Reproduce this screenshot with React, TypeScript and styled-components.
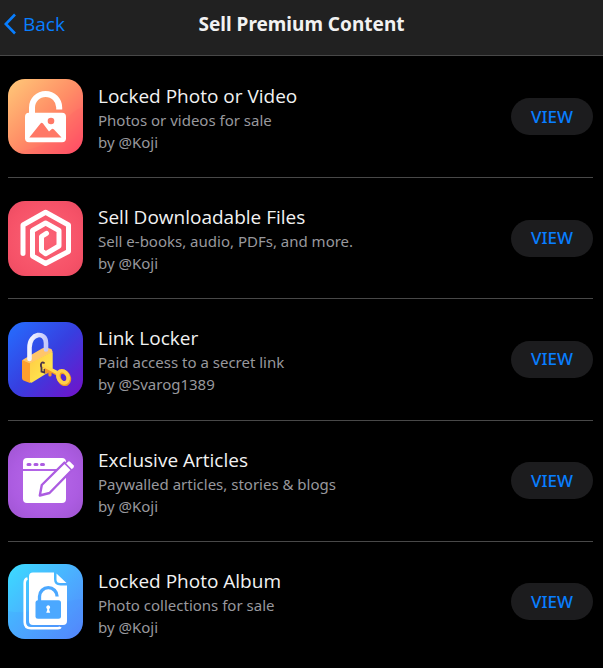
import React from 'react';
import styled, { createGlobalStyle } from 'styled-components';

const GlobalStyle = createGlobalStyle`
  * { box-sizing: border-box; }
  body {
    margin: 0;
    background: #000;
    color: #f2f2f2;
    font-family: 'Noto Sans', 'Open Sans', sans-serif;
  }
`;

const Page = styled.main`
  display: flex;
  flex-direction: column;
  min-height: 100vh;
  padding-bottom: 6px;
`;

const Header = styled.header`
  display: grid;
  grid-template-columns: 1fr auto 1fr;
  align-items: center;
  height: 56px;
  padding: 0 4px 8px;
  background: #212121;
  border-bottom: 1px solid #484848;
`;

const BackLink = styled.a`
  display: flex;
  align-items: center;
  gap: 7px;
  color: #087eff;
  font-family: 'Open Sans', sans-serif;
  font-size: 19px;
  line-height: 24px;
  text-decoration: none;
`;

const Title = styled.h1`
  margin: 0;
  font-size: 19px;
  line-height: 24px;
  font-weight: 700;
`;

const List = styled.ul`
  flex: 1;
  display: grid;
  grid-auto-rows: 1fr;
  margin: 0;
  padding: 0 10px 0 8px;
  list-style: none;
`;

const Row = styled.li`
  display: flex;
  align-items: center;
  gap: 15px;
  padding: 16px 0;
  & + & { border-top: 1px solid #484848; }
`;

const AppIcon = styled.svg`
  flex: none;
  width: 75px;
  height: 75px;
  border-radius: 17px;
`;

const Info = styled.div`
  flex: 1;
  min-width: 0;
  padding-top: 2px;
`;

const Name = styled.h2`
  margin: 0;
  font-family: 'Open Sans', sans-serif;
  font-size: 19px;
  line-height: 26px;
  font-weight: 500;
`;

const Detail = styled.p`
  margin: 0;
  color: #98989d;
  font-size: 15px;
  line-height: 22px;
`;

const ViewButton = styled.button`
  flex: none;
  height: 37px;
  padding: 0 20px;
  border: 0;
  border-radius: 19px;
  background: #1c1c1e;
  color: #087eff;
  font: 500 17px/24px 'Noto Sans', 'Open Sans', sans-serif;
  cursor: pointer;
`;

const PhotoIcon = () => (
  <AppIcon viewBox="0 0 75 75" aria-hidden="true">
    <defs>
      <linearGradient id="photo" x1="0" y1="0" x2="1" y2="1">
        <stop offset="0" stopColor="#ffc978" />
        <stop offset=".5" stopColor="#ff8d66" />
        <stop offset="1" stopColor="#ff4866" />
      </linearGradient>
    </defs>
    <rect width="75" height="75" fill="url(#photo)" />
    <path d="M75 0V28C61 33 56 43 46 56S22 70 0 75H75Z" fill="#ff5064" opacity=".12" />
    <path d="M24 36V28.500a13.600 13.600 0 0 1 27.200 0V30.500" fill="none" stroke="#fff" strokeWidth="6" />
    <rect x="17" y="33.700" width="41" height="29.600" rx="4" fill="#fff" />
    <path d="M21.300 58.500 32.500 44.500Q33.700 43 35 44.500L41 52.500 43.500 50.200Q44.700 49.300 46 50.500L53.500 58.500Z" fill="#ff7866" />
    <circle cx="43" cy="42" r="3.300" fill="#ff7866" />
  </AppIcon>
);

const FilesIcon = () => (
  <AppIcon viewBox="0 0 75 75" aria-hidden="true">
    <defs>
      <radialGradient id="files" cx=".5" cy=".5" r=".75">
        <stop offset="0" stopColor="#fb6476" />
        <stop offset=".65" stopColor="#f65268" />
        <stop offset="1" stopColor="#e94a60" />
      </radialGradient>
    </defs>
    <rect width="75" height="75" fill="url(#files)" />
    <path
      d="M15 52.500V24L37.600 11.300 60.500 24V50.500L37.600 62.500 24.500 55V29.500L37.600 22 51 29.500V45L37.600 52.800 33.500 49.800V35.500L38.500 32.300"
      fill="none" stroke="#fff" strokeWidth="5" strokeLinecap="round" strokeLinejoin="round"
    />
  </AppIcon>
);

const LockerIcon = () => (
  <AppIcon viewBox="0 0 75 75" aria-hidden="true">
    <defs>
      <linearGradient id="locker" x1="0" y1="0" x2="1" y2="1">
        <stop offset="0" stopColor="#246fff" />
        <stop offset=".5" stopColor="#373fe0" />
        <stop offset="1" stopColor="#7410c8" />
      </linearGradient>
      <linearGradient id="brass" x1="0" y1="0" x2="1" y2="1">
        <stop offset="0" stopColor="#ffc944" />
        <stop offset="1" stopColor="#fff052" />
      </linearGradient>
      <linearGradient id="steel">
        <stop offset="0" stopColor="#f4f4ff" />
        <stop offset="1" stopColor="#c5c8fb" />
      </linearGradient>
    </defs>
    <rect width="75" height="75" fill="url(#locker)" />
    <path d="M14.200 39.200Q14 38 16 37L34 26.500Q36 25.500 38 25.500L43.500 27 44.700 30 22 42Z" fill="#ffc56b" />
    <path d="M14 38 22 41.500V61L15.500 58.500Q14 57.500 14 56Z" fill="#ff9f2e" />
    <path d="M22 41.300 42.500 30.500Q44.700 29.500 44.700 31V46Q44.700 48 42.500 49L24 60.500Q22 61.500 22 59.500Z" fill="url(#brass)" />
    <path d="M21.500 37V25.500C21.500 10.500 38 9 38 21V27.500" fill="none" stroke="url(#steel)" strokeWidth="4.600" strokeLinecap="round" />
    <path d="M36.500 41.500C34.500 38.500 31.700 42 33.500 45.500V49.500L36.500 50.500V47" fill="none" stroke="#4b364a" strokeWidth="1.800" />
    <path d="M37 45 49 52M42 48.500V53M38.800 46.500V50" fill="none" stroke="#f49a26" strokeWidth="3.200" strokeLinecap="round" />
    <path d="M36 43.800 49 50.500" fill="none" stroke="#ffda4b" strokeWidth="3.200" strokeLinecap="round" />
    <ellipse cx="55.800" cy="55.800" rx="4.800" ry="6.400" transform="rotate(-28 55.800 55.800)" fill="none" stroke="#ef9825" strokeWidth="4.400" />
    <ellipse cx="55" cy="54.800" rx="4.800" ry="6.400" transform="rotate(-28 55 54.800)" fill="none" stroke="#ffd04a" strokeWidth="3.600" />
  </AppIcon>
);

const ArticleIcon = () => (
  <AppIcon viewBox="0 0 75 75" aria-hidden="true">
    <defs>
      <radialGradient id="article" cx=".5" cy=".5" r=".75">
        <stop offset="0" stopColor="#b869ea" />
        <stop offset=".6" stopColor="#ac5ce1" />
        <stop offset="1" stopColor="#9d53cf" />
      </radialGradient>
    </defs>
    <rect width="75" height="75" fill="url(#article)" />
    <path d="M19 15H54Q58 15 58 19V26H15V19Q15 15 19 15ZM15 28H58V56Q58 60 54 60H19Q15 60 15 56Z" fill="#fff" />
    <path d="M20 21.500h2M27 21.500h2M33.500 21.500h2" stroke="#ac5ce1" strokeWidth="3" strokeLinecap="round" />
    <path d="M31.800 52.500 33.800 42 56.500 19.500 64 27 41.500 50Z" fill="#fff" stroke="#ac5ce1" strokeWidth="2.400" strokeLinejoin="round" />
    <path d="M60 18.800Q61 17.800 62 18.800L65.500 22.300Q66.500 23.300 65.500 24.500L63.800 26.300 58.200 20.600Z" fill="#fff" />
  </AppIcon>
);

const AlbumIcon = () => (
  <AppIcon viewBox="0 0 75 75" aria-hidden="true">
    <defs>
      <linearGradient id="album" x1="0" y1="0" x2="1" y2="1">
        <stop offset="0" stopColor="#3bdcff" />
        <stop offset=".5" stopColor="#4bafff" />
        <stop offset="1" stopColor="#5685fb" />
      </linearGradient>
    </defs>
    <rect width="75" height="75" fill="url(#album)" />
    <path d="M0 47C25 53 52 36 75 35V75H0Z" fill="#4584ff" opacity=".13" />
    <path d="M19.500 14.500Q16.700 15 16.700 19V58Q16.700 64.300 23 64.300H50Q52 64.300 52.500 63" fill="none" stroke="#fff" strokeWidth="2.600" />
    <path d="M25 8.500H46V15Q46 21.500 52.500 21.500H59V57Q59 61 55 61H25Q21 61 21 57V12.500Q21 8.500 25 8.500Z" fill="#fff" />
    <path d="M48.500 9.500 58.500 19H52Q48.500 19 48.500 15.500Z" fill="#fff" />
    <path d="M31.500 38V32.500a8.800 8.800 0 0 1 17.600 0" fill="none" stroke="#4ba8ff" strokeWidth="3.300" />
    <rect x="27.500" y="36.300" width="25.500" height="18.500" rx="2.500" fill="#4ba8ff" />
    <path d="M40.200 41.300a2 2 0 0 0-1 3.700v1l-1 2.800h4l-1-2.800v-1a2 2 0 0 0-1-3.700Z" fill="#fff" />
  </AppIcon>
);

const items = [
  { name: 'Locked Photo or Video', detail: 'Photos or videos for sale', author: '@Koji', Icon: PhotoIcon },
  { name: 'Sell Downloadable Files', detail: 'Sell e-books, audio, PDFs, and more.', author: '@Koji', Icon: FilesIcon },
  { name: 'Link Locker', detail: 'Paid access to a secret link', author: '@Svarog1389', Icon: LockerIcon },
  { name: 'Exclusive Articles', detail: 'Paywalled articles, stories & blogs', author: '@Koji', Icon: ArticleIcon },
  { name: 'Locked Photo Album', detail: 'Photo collections for sale', author: '@Koji', Icon: AlbumIcon },
];

export default function App() {
  return (
    <>
      <GlobalStyle />
      <Page>
        <Header>
          <BackLink href="#">
            <svg width="12" height="22" viewBox="0 0 12 22" fill="none" stroke="#087eff" strokeWidth="2.600" aria-hidden="true">
              <path d="M11 1.500 1.800 11 11 20.500" />
            </svg>
            Back
          </BackLink>
          <Title>Sell Premium Content</Title>
        </Header>
        <List>
          {items.map(({ name, detail, author, Icon }) => (
            <Row key={name}>
              <Icon />
              <Info>
                <Name>{name}</Name>
                <Detail>{detail}</Detail>
                <Detail>by {author}</Detail>
              </Info>
              <ViewButton type="button" aria-label={`View ${name}`}>VIEW</ViewButton>
            </Row>
          ))}
        </List>
      </Page>
    </>
  );
}
